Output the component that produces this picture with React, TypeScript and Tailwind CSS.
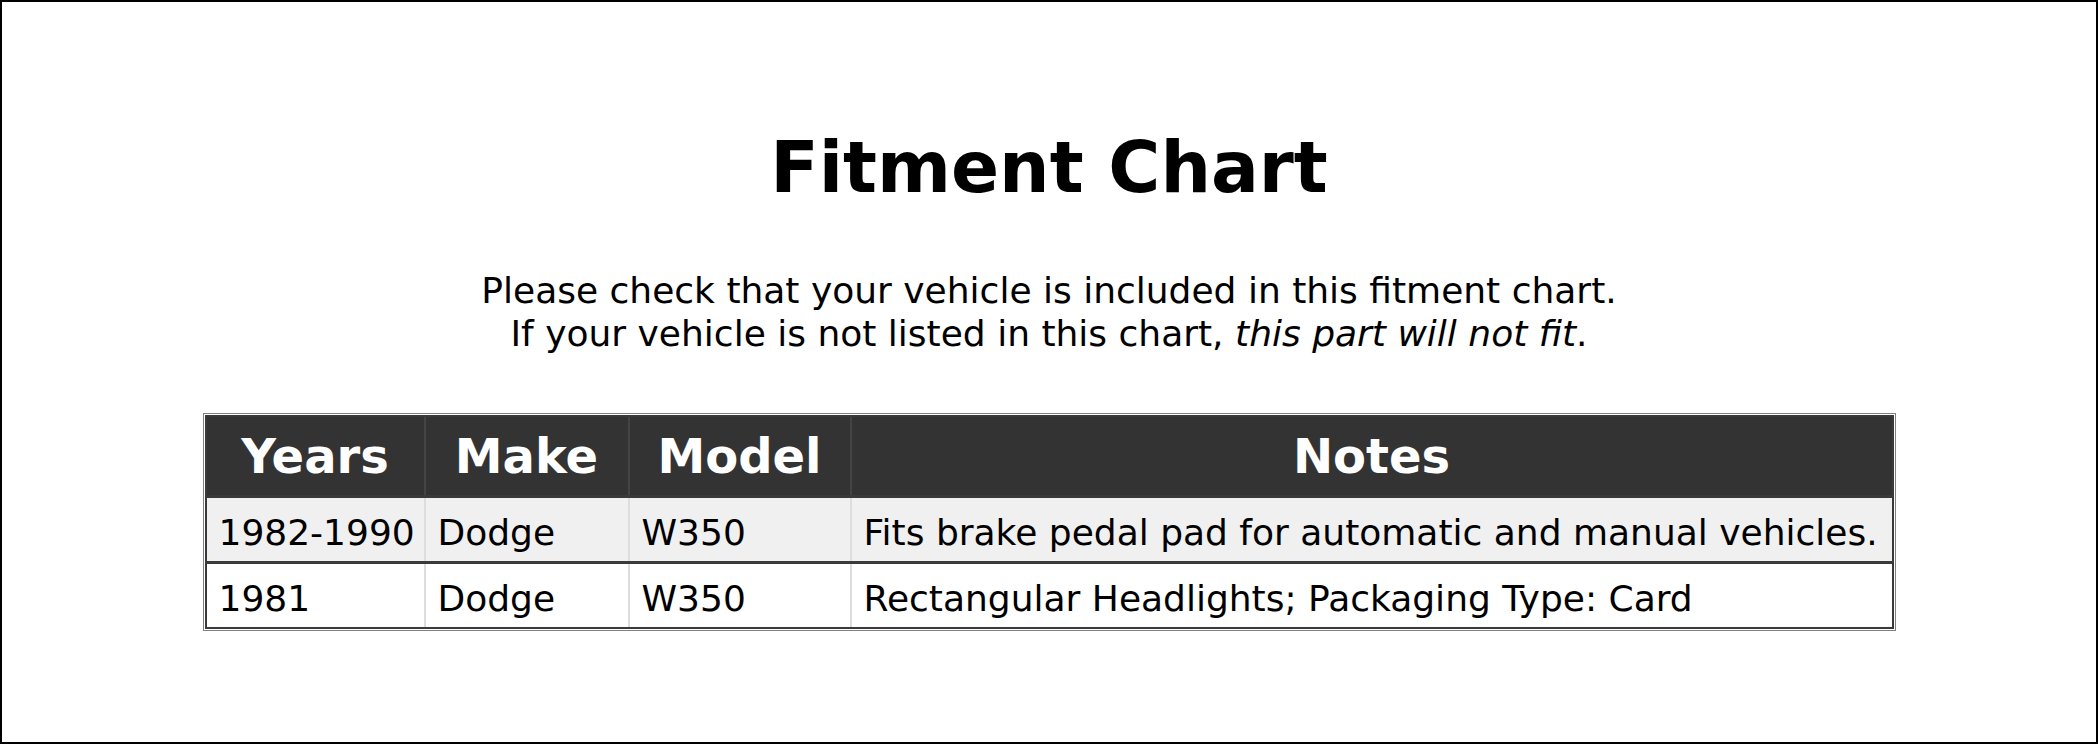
import React from "react";

const rows = [
  { years: "1982-1990", make: "Dodge", model: "W350", notes: "Fits brake pedal pad for automatic and manual vehicles.", bg: "bg-[#f0f0f0]" },
  { years: "1981", make: "Dodge", model: "W350", notes: "Rectangular Headlights; Packaging Type: Card", bg: "bg-white" },
];

export default function App() {
  return (
    <div
      className="h-[744px] border-2 border-black bg-white text-black flex flex-col items-center"
      style={{ fontFamily: '"DejaVu Sans", Verdana, sans-serif' }}
    >
      <h1 className="mt-[124px] text-[71px] leading-[84px] font-bold">Fitment Chart</h1>
      <p className="mt-[59px] text-[36px] leading-[43px] text-center">
        Please check that your vehicle is included in this fitment chart.
        <br />
        If your vehicle is not listed in this chart, <em>this part will not fit</em>.
      </p>
      <div className="mt-[58px] border border-[#808080] p-px">
        <div className="grid grid-cols-[219px_204px_222px_1040px] border-2 border-[#3a3a3a] bg-[#333333] text-white text-[48px] leading-[56px] font-bold">
          <div className="py-[11px] text-center border-r-2 border-[#444444]">Years</div>
          <div className="py-[11px] text-center border-r-2 border-[#444444]">Make</div>
          <div className="py-[11px] text-center border-r-2 border-[#444444]">Model</div>
          <div className="py-[11px] text-center">Notes</div>
        </div>
        {rows.map((r, i) => (
          <div
            key={i}
            className={`grid grid-cols-[219px_204px_222px_1040px] border-x-2 border-b-2 border-t border-[#3a3a3a] ${r.bg} text-[36px] leading-[41px]`}
          >
            <div className="px-3 pt-[14px] pb-[8px] border-r-2 border-[#dddddd] whitespace-nowrap">{r.years}</div>
            <div className="px-3 pt-[14px] pb-[8px] border-r-2 border-[#dddddd] whitespace-nowrap">{r.make}</div>
            <div className="px-3 pt-[14px] pb-[8px] border-r-2 border-[#dddddd] whitespace-nowrap">{r.model}</div>
            <div className="px-3 pt-[14px] pb-[8px] whitespace-nowrap">{r.notes}</div>
          </div>
        ))}
      </div>
    </div>
  );
}
